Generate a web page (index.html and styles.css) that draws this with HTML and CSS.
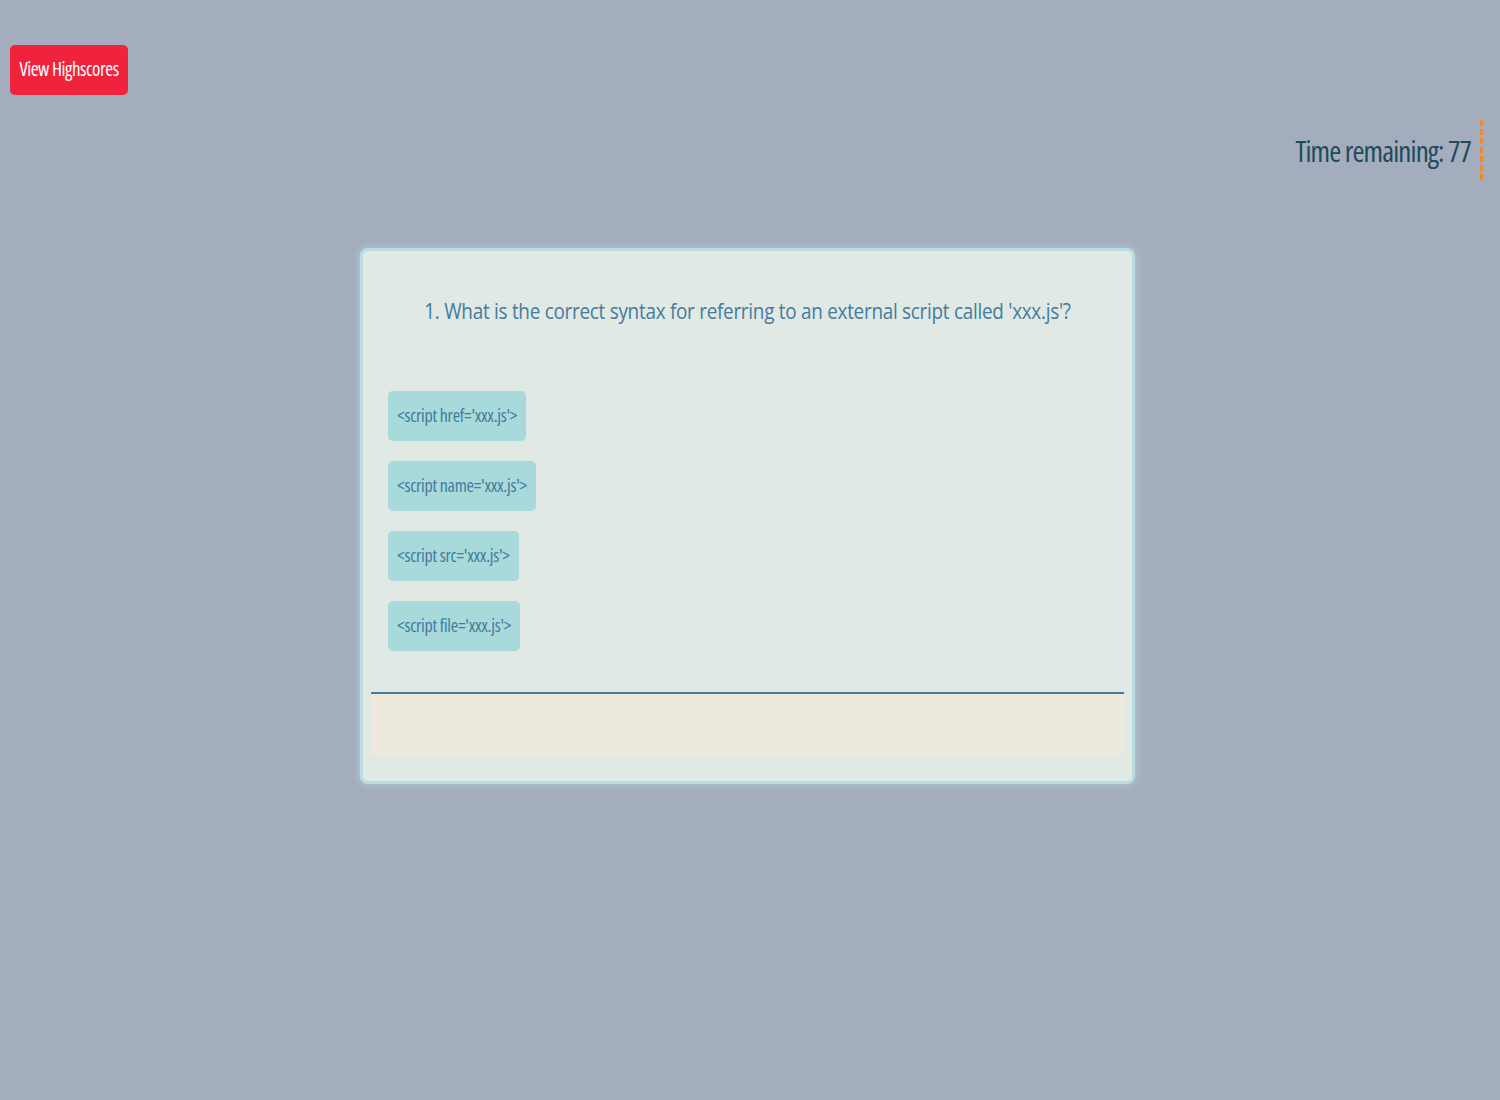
FILE: index.html
```html
<!DOCTYPE html>
<html lang="en">
<head>
<meta charset="utf-8">
<title>Code Quiz</title>
<link rel="stylesheet" href="styles.css">
</head>
<body>
<header class="top">
  <button class="hs-btn">View Highscores</button>
</header>
<div class="timer-row">
  <div class="timer">Time remaining: 77</div>
</div>
<main class="card">
  <h2 class="question">1. What is the correct syntax for referring to an external script called 'xxx.js'?</h2>
  <div class="answers">
    <button class="answer">&lt;script href='xxx.js'&gt;</button>
    <button class="answer">&lt;script name='xxx.js'&gt;</button>
    <button class="answer">&lt;script src='xxx.js'&gt;</button>
    <button class="answer">&lt;script file='xxx.js'&gt;</button>
  </div>
  <div class="feedback"></div>
</main>
</body>
</html>
```
FILE: styles.css
```css
html, body {
  margin: 0;
  padding: 0;
}
body {
  background: #a4adbe;
  min-height: 1100px;
  font-family: "Open Sans", "Liberation Sans", sans-serif;
}
.top {
  padding: 45px 0 0 10px;
  height: 50px;
}
.hs-btn {
  width: 118px;
  height: 50px;
  border: none;
  border-radius: 5px;
  background: #ef233c;
  color: #fff;
  font-family: "Open Sans", sans-serif;
  font-stretch: 75%;
  font-size: 19px;
  padding: 0 0 2px;
  white-space: nowrap;
  letter-spacing: -0.45px;
}
.timer-row {
  display: flex;
  justify-content: flex-end;
  padding: 25px 17px 0 0;
}
.timer {
  height: 60px;
  display: flex;
  align-items: center;
  padding-right: 9px;
  border-right: 3px dashed #f08a24;
  font-family: "Open Sans", sans-serif;
  font-stretch: 75%;
  font-size: 29px;
  color: #1f4b5b;
  letter-spacing: -0.9px;
}
.card {
  margin: 68px 0 0 360px;
  background: #e0e9e4;
  border: 3px solid #b9dde0;
  border-radius: 8px;
  box-shadow: 0 0 8px rgba(180, 220, 222, 0.8);
  padding: 0 8px 25px;
  box-sizing: content-box;
  width: 753px;
}
.question {
  margin: 0;
  padding: 46px 0 0;
  text-align: center;
  font-family: "Open Sans", "Noto Sans", sans-serif;
  font-weight: 500;
  font-size: 21px;
  color: #457b9d;
  letter-spacing: -0.3px;
  transform: scaleX(0.9);
}
.answers {
  display: flex;
  flex-direction: column;
  align-items: flex-start;
  gap: 20px;
  padding: 66px 0 0 17px;
}
.answer {
  height: 50px;
  padding: 0 9px 2px;
  border: none;
  border-radius: 5px;
  background: #a8dadc;
  color: #457b9d;
  font-family: "Open Sans", sans-serif;
  font-stretch: 75%;
  font-size: 18px;
  letter-spacing: -0.3px;
}
.feedback {
  margin-top: 41px;
  height: 62px;
  border-top: 2px solid #457b9d;
  background: #ede9dc;
}
```
